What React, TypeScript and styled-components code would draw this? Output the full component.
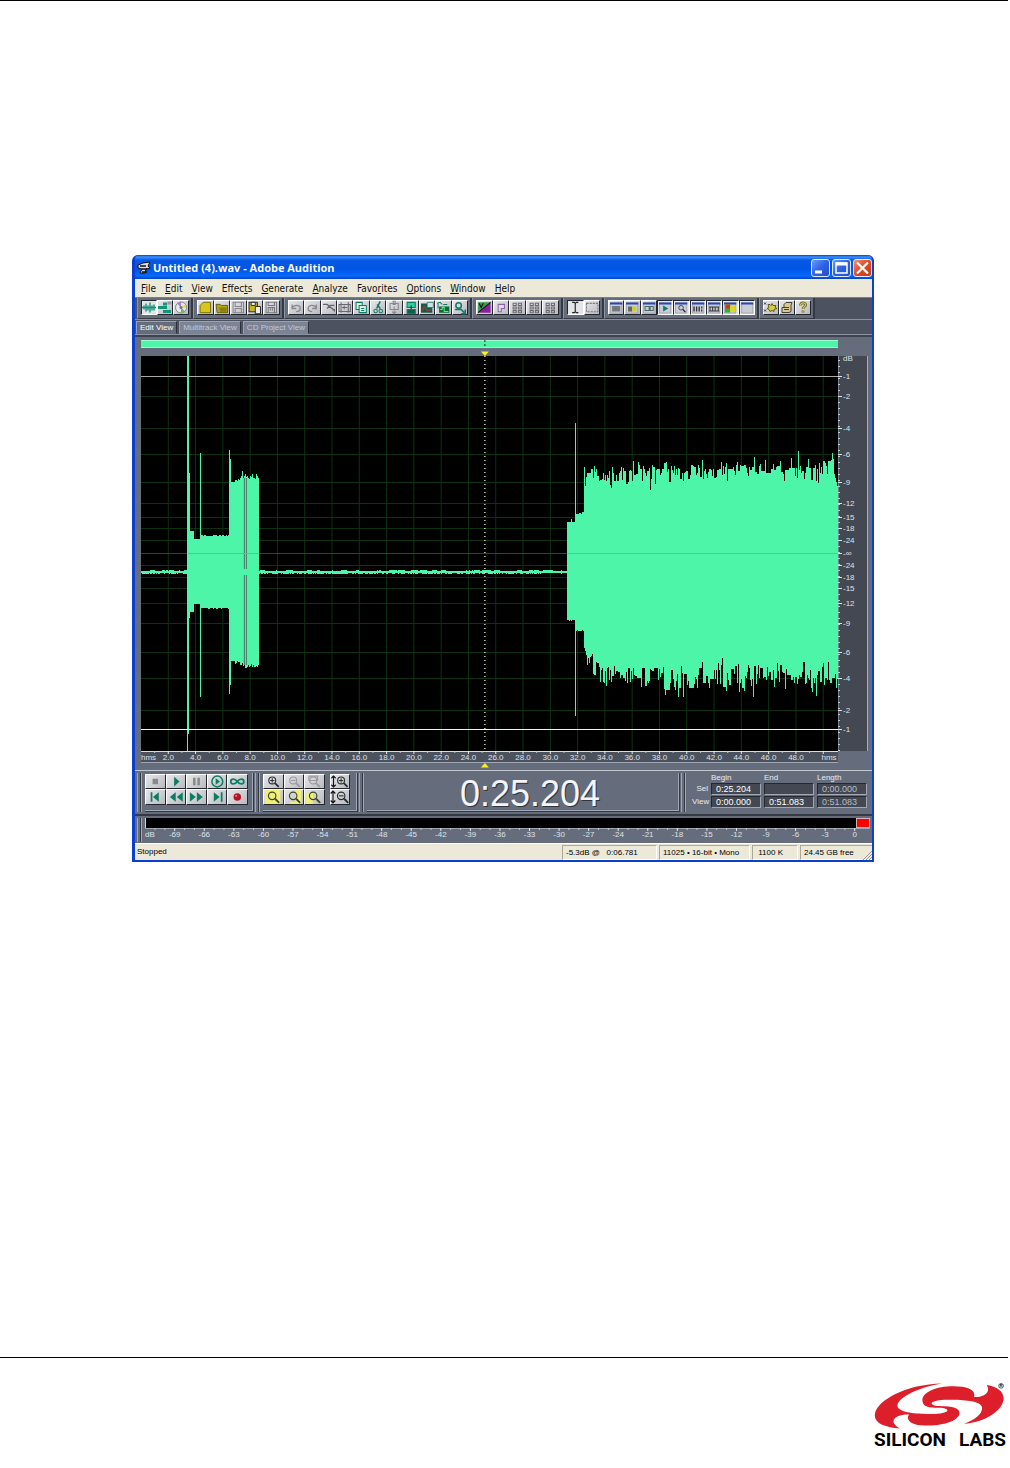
import React from "react";
import styled, { createGlobalStyle, css } from "styled-components";

const GlobalStyle = createGlobalStyle`
  *, *::before, *::after { box-sizing: border-box; }
  body { margin: 0; background: #fff; }
  button, input { font: inherit; margin: 0; padding: 0; }
`;

const sans = `"Liberation Sans", Arial, sans-serif`;
const uiSans = `"DejaVu Sans Condensed", "DejaVu Sans", Tahoma, sans-serif`;
const mint = "#4df5a9";
const steel = "#656d7c";

/* ---------- page ---------- */

const Page = styled.div`
  display: flex;
  flex-direction: column;
  min-height: 100vh;
  padding-right: 2px;
  font-family: ${sans};
`;
const Rule = styled.hr`
  width: 100%;
  height: 1px;
  margin: 0;
  border: 0;
  background: #000;
`;
const Figure = styled.main`
  flex: 1;
  padding: 254px 134px 0 132px;
`;
const Footer = styled.footer`
  display: flex;
  justify-content: flex-end;
  height: 110px;
  padding: 24px 2px 0 0;
`;
const Brand = styled.div`
  width: 132px;
`;
const Wordmark = styled.div`
  display: flex;
  justify-content: space-between;
  font: bold 19px/20px Roboto, sans-serif;
  color: #000;
`;

/* ---------- window frame ---------- */

const Window = styled.section`
  overflow: hidden;
  border: solid #0a3fd0;
  border-width: 0 2px 2px 3px;
  border-radius: 6px 6px 0 0;
  background: ${steel};
`;
const TitleBar = styled.header`
  display: flex;
  align-items: center;
  gap: 2px;
  height: 24px;
  padding: 2px 0 0 2px;
  background: linear-gradient(#0a3fc8 0, #3b93ff 2px, #0859e6 5px, #0054e3 14px, #0569fd 21px, #0342c0 24px);
`;
const Title = styled.h1`
  flex: 1;
  margin: 0;
  font: bold 11px/16px "Open Sans", "Trebuchet MS", sans-serif;
  color: #fff;
`;
const CaptionButton = styled.button<{ $close?: boolean }>`
  width: 19px;
  height: 18px;
  border: 1px solid #dfe8ff;
  border-radius: 3px;
  background: ${(p) => (p.$close ? "linear-gradient(135deg,#f09070,#dc4a24 50%,#c43a18)" : "linear-gradient(135deg,#6c9cf8,#2d62e2 50%,#1f50d0)")};
  svg { display: block; width: 17px; height: 16px; }
`;
const MenuBar = styled.nav`
  display: flex;
  gap: 9px;
  height: 18px;
  padding-left: 6px;
  background: #ece9d8;
`;
const MenuItem = styled.button`
  border: 0;
  background: none;
  font: 10px/17px ${uiSans};
  color: #111;
  u { text-underline-offset: 1px; }
`;

/* ---------- toolbar ---------- */

const ToolBar = styled.div`
  display: flex;
  height: 22px;
  padding-left: 2px;
  background: #4c525f;
  border-top: 1px solid #777f8c;
`;
const ToolGroup = styled.div<{ $w: number }>`
  display: flex;
  width: ${(p) => p.$w}px;
  padding: 2px 2px 3px 3px;
  border: solid;
  border-width: 0 2px 1px 1px;
  border-color: #343944 #343944 #343944 #8b93a1;
  background: ${steel};
`;
const raised = css`
  border: 1px solid;
  border-color: #fff #24272d #24272d #fff;
  background: linear-gradient(135deg, #e6e6ea, #b9bac0);
`;
const ToolButton = styled.button<{ $down?: boolean }>`
  ${raised}
  flex: 1;
  min-width: 0;
  ${(p) => p.$down && "border-color:#24272d #fff #fff #24272d; background:#e4e5e8;"}
  svg { display: block; width: 100%; height: 100%; }
`;

/* ---------- view tabs ---------- */

const Tabs = styled.div`
  display: flex;
  align-items: flex-end;
  gap: 2px;
  height: 15px;
  padding-left: 1px;
  border-top: 1px solid #8b93a1;
  background: #4c525f;
`;
const Tab = styled.button<{ $active?: boolean }>`
  height: 13px;
  padding: 0 3px;
  border: 1px solid;
  border-color: #9aa2b0 #2c303a transparent #9aa2b0;
  background: ${(p) => (p.$active ? steel : "#7b8394")};
  font: 8px/11px ${sans};
  color: ${(p) => (p.$active ? "#fff" : "#c3c9d4")};
`;

/* ---------- wave display ---------- */

const WavePanel = styled.div`
  display: grid;
  grid-template-columns: 1fr 30px;
  grid-template-rows: 8px 8px 395px 12px 6px;
  padding: 5px 4px 1px 6px;
  border-top: 1px solid #8b93a1;
  box-shadow: inset 0 2px 0 #3e434e;
  background: ${steel};
`;
const Overview = styled.div`
  background: ${mint};
  border: solid #9ff8d0;
  border-width: 1px 0;
`;
const Empty = styled.div``;
const Canvas = styled.svg<{ $bg?: string }>`
  display: block;
  width: 100%;
  height: 100%;
  overflow: visible;
  background: ${(p) => p.$bg || "none"};
  text { font: 8px ${sans}; fill: #dfe2e8; }
`;
const Axis = styled.div`
  border-right: 1px solid #a6adba;
  background: #434852;
`;

/* ---------- transport ---------- */

const Transport = styled.div`
  display: flex;
  height: 46px;
  padding: 2px 2px 2px 1px;
  border: solid;
  border-width: 1px 0 2px;
  border-color: #c0c5ce #0000 #343944;
  background: ${steel};
`;
const Grip = styled.span`
  width: 5px;
  margin: 0 3px 0 1px;
  border: solid #a0a7b4;
  border-width: 0 1px;
  box-shadow: inset -1px 0 0 #343944;
`;
const Section = styled.div<{ $w?: number }>`
  display: flex;
  flex: ${(p) => (p.$w ? `0 0 ${p.$w}px` : "1 1 0")};
  padding: 1px 0 0;
  border: solid;
  border-width: 0 1px 1px 0;
  border-color: #343944;
  box-shadow: inset -1px -1px 0 #a0a7b4;
`;
const ButtonGrid = styled.div<{ $cols: number; $w: number }>`
  display: grid;
  grid-template-columns: repeat(${(p) => p.$cols}, 1fr);
  grid-template-rows: 15px 16px;
  width: ${(p) => p.$w}px;
  margin-right: 5px;
`;
const PadButton = styled.button`
  ${raised}
  min-width: 0;
  svg { display: block; width: 100%; height: 100%; }
`;
const Clock = styled.output`
  flex: 1;
  padding-left: 14px;
  text-align: center;
  font: 36px/40px ${sans};
  color: #f4f5f7;
  text-shadow: 1px 1px 0 #30343d;
`;
const Times = styled.table`
  flex: 0 0 181px;
  width: 181px;
  border-spacing: 3px 1px;
  table-layout: fixed;
  height: 34px;
  font: 8px/10px ${sans};
  color: #e8eaee;
  th { padding: 0; font-weight: normal; text-align: left; height: 8px; line-height: 8px; }
  tbody th { text-align: right; }
  th[scope="col"] { width: 50px; }
  td { padding: 0; }
`;
const TimeField = styled.input<{ $dim?: boolean }>`
  display: block;
  width: 100%;
  height: 12px;
  padding-left: 4px;
  border: 1px solid;
  border-color: #24272d #a0a7b4 #a0a7b4 #24272d;
  background: #434852;
  font-size: 9px;
  color: ${(p) => (p.$dim ? "#b9bec8" : "#fff")};
`;

/* ---------- level meter and status ---------- */

const Meter = styled.div`
  display: flex;
  height: 27px;
  padding: 2px 2px 1px 1px;
  background: ${steel};
`;
const MeterBody = styled.div`
  flex: 1;
`;
const MeterBar = styled.div`
  display: flex;
  justify-content: flex-end;
  height: 10px;
  border-left: 1px solid #e8e060;
  background: #000;
`;
const Clip = styled.span`
  width: 14px;
  border: 1px solid #d8b0b0;
  background: #f00;
`;
const MeterScale = styled.div`
  height: 14px;
`;
const StatusBar = styled.footer`
  display: flex;
  gap: 2px;
  height: 17px;
  padding-top: 1px;
  border-top: 1px solid #fff;
  background: #ece9d8;
  font: 8px/14px ${sans};
  color: #000;
`;
const Status = styled.span<{ $w?: number }>`
  flex: ${(p) => (p.$w ? `0 0 ${p.$w}px` : "1")};
  padding-left: ${(p) => (p.$w ? 3 : 2)}px;
  white-space: pre;
  ${(p) => p.$w && "border: 1px solid; border-color: #aca899 #fff #fff #aca899; line-height: 13px;"}
`;
const Resize = styled.svg`
  width: 9px;
  height: 9px;
  margin: 6px 0 0 -12px;
`;

/* ---------- wave data ---------- */

const COLS = 698;
const DURATION = 51.083;
const CURSOR = 25.204;
const pct = (t: number) => `${(t / DURATION) * 100}%`;

function noise(seed: number) {
  let s = seed;
  return () => {
    s = (s * 1664525 + 1013904223) % 4294967296;
    return s / 4294967296;
  };
}

function wavePath() {
  const r = noise(77);
  let d = "";
  let up = 0;
  let down = 0;
  let hum = 0;
  for (let x = 0; x < COLS; x++) {
    if (r() > 0.6) hum = r();
    let top = 215 - Math.round(hum * 0.8);
    let bot = 217 + Math.round(r() * (x < 400 ? 1 : 0.6));
    if (x >= 46 && x < 48) [top, bot] = [0, x === 46 ? 395 : 378];
    else if (x === 48) [top, bot] = [117, 262];
    else if (x > 48 && x < 53) [top, bot] = [175, 256];
    else if (x >= 53 && x < 59) [top, bot] = [183, 248];
    else if (x === 59) [top, bot] = [97, 341];
    else if (x > 59 && x < 88) [top, bot] = [180 - Math.round(r()), 252 + Math.round(r() * 0.7)];
    else if (x === 88) [top, bot] = [94, 338];
    else if (x === 89) [top, bot] = [103, 329];
    else if (x > 89 && x < 94) [top, bot] = [126, 305];
    else if (x >= 94 && x < 118) {
      const k = r() * 5;
      [top, bot] = [(x < 102 ? 125 : 123) - k, (x < 102 ? 305 : 308) + r() * 4];
      if (x === 101) top = 115;
    } else if (x >= 427 && x < 435) [top, bot] = [167 - Math.round(r()) - (x === 431 ? 4 : 0), 264 + Math.round(r() * 0.7)];
    else if (x === 435) [top, bot] = [67, 360];
    else if (x > 435 && x < 444) [top, bot] = [158 - Math.round(r() * 2), 274 + Math.round(r())];
    else if (x >= 444) {
      const p = Math.min(1, (x - 444) / 90);
      const edge = Math.min(1, (x - 444) / 24);
      if (r() > 0.3) up = r() + r() - 1;
      if (r() > 0.3) down = r() + r() - 1;
      top = 122 - p * 9 + up * 14;
      bot = 304 + edge * 15 + p * 3 + down * 17;
      const spike = r();
      if (spike > 0.95) top -= 6;
      else if (spike < 0.05) top += 8;
      const dip = r();
      if (dip > 0.93) bot += 9;
      else if (dip < 0.05) bot -= 7;
      if (x > 680 && x < 694) top -= 6;
      if (x >= 694) top = 118 + (x - 694) * 4;
      bot = Math.min(bot, 341);
    }
    d += `M${x} ${Math.round(top)}h1V${Math.round(bot)}h-1z`;
  }
  return d;
}
const WAVE = wavePath();

const DB: [number, string][] = [
  [2, "dB"], [20, "-1"], [40, "-2"], [72, "-4"], [98, "-6"], [126, "-9"], [147, "-12"], [161, "-15"], [172, "-18"],
  [184, "-24"], [197, "-∞"], [209, "-24"], [221, "-18"], [232, "-15"], [247, "-12"], [267, "-9"], [296, "-6"],
  [322, "-4"], [354, "-2"], [373, "-1"],
];
const SECONDS = Array.from({ length: 25 }, (_, i) => (i + 1) * 2);

function WaveChart() {
  return (
    <Canvas $bg="#000" role="img" aria-label="Waveform">
      {SECONDS.map((t) => <line key={t} x1={pct(t)} x2={pct(t)} y1="0" y2="100%" stroke="#0d3212" />)}
      {DB.slice(2, 19).filter(([y]) => y !== 197).map(([y]) => <line key={y} x1="0" x2="100%" y1={y + 0.5} y2={y + 0.5} stroke="#0d3212" />)}
      <rect x="0" y="197" width="100%" height="1" fill="#9c1218" />
      <svg width="100%" height="395" viewBox={`0 0 ${COLS} 395`} preserveAspectRatio="none">
        <path d={WAVE} fill={mint} shapeRendering="crispEdges" />
        <path d="M103.5 122V213M105.5 122V213M103.5 219V309M105.5 219V309" stroke="#4c7464" fill="none" />
        <path d="M47 197.5H118M427 197.5H698" stroke="#50c896" fill="none" />
      </svg>
      <line x1="0" x2="100%" y1="20.5" y2="20.5" stroke="#a9aca4" />
      <line x1="0" x2="100%" y1="373.5" y2="373.5" stroke="#e8fbe8" />
      <line x1={pct(CURSOR)} x2={pct(CURSOR)} y1="0" y2="100%" stroke="#f0f0c8" strokeWidth="1.300" strokeDasharray="1 3" />
    </Canvas>
  );
}

function Marker({ down }: { down?: boolean }) {
  return (
    <Canvas aria-hidden="true">
      <svg x={pct(CURSOR)} width="1" height="8" overflow="visible">
        {down && <path d="M0-8V0" stroke="#222" strokeDasharray="2 2" />}
        <path d={down ? "M-4 3.500H4L0 8z" : "M-4 4.500H4L0 0z"} fill="#f8f220" />
      </svg>
    </Canvas>
  );
}

function TimeRuler() {
  return (
    <Canvas $bg="#4b515d" aria-hidden="true">
      <line x2="100%" y1=".5" y2=".5" stroke="#d8dce2" />
      <line x2="100%" y1="11.500" y2="11.500" stroke="#a0a7b4" />
      {SECONDS.map((t) => <line key={t} x1={pct(t)} x2={pct(t)} y1="0" y2="3" stroke="#e8eaee" />)}
      {SECONDS.map((t) => <line key={t} x1={pct(t - 1)} x2={pct(t - 1)} y1="0" y2="2" stroke="#c0c4cc" />)}
      <text x="0" y="9">hms</text>
      {SECONDS.slice(0, 24).map((t) => <text key={t} x={pct(t)} y="9" textAnchor="middle">{t.toFixed(1)}</text>)}
      <text x="99.800%" y="9" textAnchor="end">hms</text>
    </Canvas>
  );
}

function DbAxis() {
  return (
    <Canvas aria-hidden="true">
      <path d="M.5 0V395" stroke="#777f8c" />
      <path d="M1 4V395" stroke="#c9ced6" strokeWidth="2" strokeDasharray="1 5" />
      {DB.map(([y, label], i) => (
        <g key={i}>
          {i > 0 && <path d={`M0 ${y + 0.5}H4`} stroke="#e0e3e8" />}
          <text x="5" y={y + 3}>{label}</text>
        </g>
      ))}
    </Canvas>
  );
}

function MeterTicks() {
  const marks = Array.from({ length: 24 }, (_, i) => ({ x: 4.1 + i * 4.078, v: -69 + i * 3 }));
  return (
    <Canvas aria-hidden="true">
      <line x2="100%" y1=".5" y2=".5" stroke="#a0a7b4" />
      <text x="0" y="9">dB</text>
      {marks.map((m) => (
        <g key={m.v}>
          <line x1={`${m.x}%`} x2={`${m.x}%`} y1="0" y2="3" stroke="#e8eaee" />
          <line x1={`${m.x - 1.36}%`} x2={`${m.x - 1.36}%`} y1="0" y2="2" stroke="#c0c4cc" />
          <line x1={`${m.x - 2.72}%`} x2={`${m.x - 2.72}%`} y1="0" y2="2" stroke="#c0c4cc" />
          <text x={`${m.x}%`} y="9" textAnchor="middle">{m.v}</text>
        </g>
      ))}
    </Canvas>
  );
}

/* ---------- icons, drawn on a 16 x 14 grid ---------- */

const G = "#0b7d62";
const win = (inner: React.ReactNode) => (
  <>
    <path d="M2.500 2.500h11v10h-11z" fill="#c9ccd2" stroke="#8a8f99" strokeWidth=".6" />
    <path d="M2 2h12v2H2z" fill="#2448b8" />
    {inner}
  </>
);
const grid9 = <path d="M4 3h3v2H4zM9 3h3v2H9zM4 6.500h3v2H4zM9 6.500h3v2H9zM4 10h3v2H4zM9 10h3v2H9z" fill="none" stroke="#6a6a6e" strokeWidth="1" />;
const lens = (c: string) => <g fill="none" stroke={c}><circle cx="7" cy="6" r="3.200" /><path d="M9.500 8.500L13 12" strokeWidth="1.600" /></g>;

const ICONS: Record<string, React.ReactNode> = {
  "Edit waveform": <path d="M1 7h14M3 5v4M5 3v8M7 5v5M9 2v10M11 5v5M13 4v6" fill="none" stroke="#12937a" strokeWidth="1.400" />,
  "Multitrack": <g fill="#12937a"><path d="M6 2h4v3H6zM1 5.500h9v3H1zM6 9.500h8v3H6z" /><path d="M10.500 1h4v3h-4z" fill="#999" /></g>,
  "CD project": <g><circle cx="8" cy="7" r="5.500" fill="#e8e8ee" stroke="#888" /><path d="M8 7L4 3a6 6 0 014-1.500z" fill="#b07ad0" /><path d="M8 7l4 4a6 6 0 01-4 1.500z" fill="#68b860" /><path d="M8 7l5-3v3z" fill="#e0d040" /><circle cx="8" cy="7" r="1.500" fill="#777" /></g>,
  "New": <path d="M3 5l3-3h7v10H3z" fill="#d9c51c" stroke="#6a5d08" strokeWidth=".8" />,
  "Open": <g><path d="M2 4h4l1 1h6v7H3z" fill="#b3a414" stroke="#5a5008" strokeWidth=".8" /><path d="M5 7h7v4H6z" fill="#8c7e0c" /></g>,
  "Save": <path d="M3 2h10v10H3zM5 2v4h6V2M5 12V8h6v4" fill="none" stroke="#85858a" />,
  "Save as": <g><path d="M2 2h8v9H2z" fill="#c8b820" stroke="#333" /><path d="M4 2h4v3H4zM8 6h5v7H8z" fill="#eee" stroke="#222" strokeWidth=".9" /></g>,
  "Save all": <path d="M3 2h10v10H3zM5 2v3h6V2M5 12V7h6v5M7 7v3M9 7v3" fill="none" stroke="#77777c" />,
  "Undo": <path d="M4 8c1-4 8-4 8 0 0 2-2 3-4 3M4 4v4h4" fill="none" stroke="#88888e" strokeWidth="1.300" />,
  "Redo": <path d="M12 8c-1-4-8-4-8 0 0 2 2 3 4 3M12 4v4H8" fill="none" stroke="#88888e" strokeWidth="1.300" />,
  "Repeat": <path d="M2 4h4l6 5M6 8l3-3h4M11 9h2v2" fill="none" stroke="#66666c" strokeWidth="1.300" />,
  "Trim": <path d="M2 4h11v7H2zM4 2v10M11 2v10M5 7h5M7 5v4" fill="none" stroke="#66666c" />,
  "Copy": <g fill="#d8efe6" stroke={G}><path d="M3 2h6v7H3z" /><path d="M6 5h7v7H6zM8 8h3M8 10h3" /></g>,
  "Cut": <g stroke={G} fill="none"><path d="M10 1L6.500 8M7 4l3 4" strokeWidth="1.500" /><circle cx="5.500" cy="10.500" r="1.700" /><circle cx="10.500" cy="10.500" r="1.700" /></g>,
  "Paste": <path d="M4 3h8v6H4zM7 1h2v3H7zM8 6v7M6 11l2 2 2-2" fill="none" stroke="#88888e" />,
  "Paste new": <g stroke={G}><path d="M4 2h8v5H4z" fill="#2fd0a4" /><path d="M8 5v5" stroke="#111" /><path d="M4 9h8v4H4z" fill="#0c6048" /></g>,
  "Mix paste": <g><path d="M2 3h11v9H2z" fill="#0c6048" /><path d="M8 2h6v5H8z" fill="#cde" stroke={G} strokeWidth=".7" /><path d="M3 10l2-4 3 4 4-1" stroke="#c83030" fill="none" /></g>,
  "Insert": <g><path d="M4 6h10v6H4z" fill="#0a6b3a" /><path d="M2 3l3-1 2 2M3 2v6M8 4h4" stroke={G} fill="none" /><path d="M5 9h2V7h2v4h4" stroke="#60f060" fill="none" /></g>,
  "Convert": <g fill="none" stroke={G} strokeWidth="1.500"><circle cx="6.500" cy="5" r="2.700" /><path d="M3 9h6l3 3M13 9v4H9" /></g>,
  "Spectral": <g><path d="M2 2h12L2 12z" fill="#3c9c54" /><path d="M14 2v10H2z" fill="#8a20a0" /><path d="M2 12L14 2M3 3l2 4 2-4" stroke="#111" fill="none" /></g>,
  "Snap": <path d="M5 11V4h6v4H8v3z" fill="#ddd" stroke="#8a62a8" />,
  "Cue list": grid9, "Play list": grid9, "Group waves": grid9,
  "Time selection": <path d="M5 2h2l1 1 1-1h2M8 3v8M5 12h2l1-1 1 1h2" fill="none" stroke="#222" strokeWidth="1.100" />,
  "Marquee": <path d="M2.500 3h11v8h-11z" fill="none" stroke="#777" strokeDasharray="2 1" />,
  "Files window": win(<path d="M4 5.500h8v5.500H4z" fill="#75777c" />),
  "Effects window": win(<><path d="M4 6h4v5H4z" fill="#666" /><path d="M8 6h4v5H8z" fill="#cfcf30" /></>),
  "Favorites window": win(<path d="M4 6h4v4H4zM9 6h3v4H9z" fill="none" stroke="#4a6c66" />),
  "Transport window": win(<path d="M6 5l5 3-5 3z" fill={G} />),
  "Zoom window": win(<g transform="translate(3 3) scale(.7)">{lens("#222")}</g>),
  "Time window": win(<path d="M4 6v5M6.500 6v5M9 6v5M11.500 6v2M11.500 9v2" fill="none" stroke="#333" strokeWidth="1.300" />),
  "Level window": win(<path d="M3 6.500h10M3 10.500h10M4 6v5M6.500 6v5M9 6v5M12 6v5" stroke="#333" />),
  "Placekeeper": win(<><path d="M3 4h5v8H3z" fill="#26b432" /><path d="M4 4h4v4H4z" fill="#e03020" /><path d="M8 5h5v6H8z" fill="#e0d820" /></>),
  "Session window": win(null),
  "Options": <g><path d="M1 2l2 2M3 2L1 4M1 9l2 2M3 9l-2 2" stroke="#333" /><path d="M5 4h2l1 1 1-2 1 2h3l-1 2 2 1-3 1v2l-2-1-2 1-1-2-2-1 2-1z" fill="#d8cc40" stroke="#55500c" strokeWidth=".9" /></g>,
  "Scripts": <path d="M5 4l2-2h6l-1 3v6l-2 1H3V7h2zM5 7h5M5 9h5" fill="#d8c890" stroke="#333" strokeWidth=".9" />,
  "Help": <g fill="none"><path d="M5.500 5c0-4 6-3 5 0-.5 1-2.500 1.500-2.500 3.500M8 10v2" stroke="#55501c" strokeWidth="2.600" /><path d="M5.500 5c0-4 6-3 5 0-.5 1-2.500 1.500-2.500 3.500M8 10v2" stroke="#d8cc50" strokeWidth="1.300" /></g>,
  "Stop": <path d="M5.500 4.500h5v5h-5z" fill="#888" />,
  "Play": <path d="M6 2.500l5 4.500-5 4.500z" fill={G} />,
  "Pause": <path d="M5 3.500h2.300v7H5zM9 3.500h2.300v7H9z" fill="#888" />,
  "Play to end": <g><circle cx="8" cy="7" r="5" fill="none" stroke={G} strokeWidth="1.400" /><path d="M6.500 4l4 3-4 3z" fill={G} /></g>,
  "Loop": <path d="M8 7c-2-3-6-3-6 0s4 3 6 0 6-3 6 0-4 3-6 0" fill="none" stroke={G} strokeWidth="1.600" />,
  "Go to start": <path d="M4 3h1.500v8H4zM11 3L6 7l5 4z" fill={G} />,
  "Rewind": <path d="M7.500 3v8L2.500 7zM13.500 3v8L8.500 7z" fill={G} />,
  "Fast forward": <path d="M2.500 3l5 4-5 4zM8.500 3l5 4-5 4z" fill={G} />,
  "Go to end": <path d="M5 3l5 4-5 4zM11 3h1.500v8H11z" fill={G} />,
  "Record": <g><circle cx="8" cy="7" r="3.200" fill="#b41420" /><circle cx="7" cy="6" r="1" fill="#f07070" /></g>,
  "Zoom in": <>{lens("#23302c")}<path d="M5 6h4M7 4v4" stroke="#333" /></>,
  "Zoom out": <>{lens("#9a9aa0")}<path d="M5 6h4" stroke="#999" /></>,
  "Zoom full": <>{lens("#9a9aa0")}<path d="M3 2h8v4H3z" stroke="#999" fill="none" /></>,
  "Zoom to selection": <><path d="M1 1h13v12H1z" fill="#f2ee7a" />{lens("#3b4a20")}</>,
  "Zoom to left edge": <><path d="M9 1h5v12H4v-2h5z" fill="#f2ee7a" />{lens("#3b4a20")}</>,
  "Zoom to right edge": <><path d="M1 13V4h6v9z" fill="#f2ee7a" />{lens("#3b4a20")}</>,
  "Zoom in vertically": <><g transform="translate(2 0)">{lens("#23302c")}<path d="M5 6h4M7 4v4" stroke="#333" /></g><path d="M2 2v10M0 4l2-2 2 2M0 10l2 2 2-2" stroke="#111" fill="none" /></>,
  "Zoom out vertically": <><g transform="translate(2 0)">{lens("#23302c")}<path d="M5 6h4" stroke="#333" /></g><path d="M2 2v10M0 4l2-2 2 2M0 10l2 2 2-2" stroke="#111" fill="none" /></>,
};
const Icon = ({ name }: { name: string }) => <svg viewBox="1 1 14 12" overflow="visible" aria-hidden="true">{ICONS[name]}</svg>;

const TOOLS: { w: number; items: string[]; down?: string[] }[] = [
  { w: 56, items: ["Edit waveform", "Multitrack", "CD project"], down: ["Edit waveform"] },
  { w: 91, items: ["New", "Open", "Save", "Save as", "Save all"] },
  { w: 188, items: ["Undo", "Redo", "Repeat", "Trim", "Copy", "Cut", "Paste", "Paste new", "Mix paste", "Insert", "Convert"] },
  { w: 91, items: ["Spectral", "Snap", "Cue list", "Play list", "Group waves"] },
  { w: 41, items: ["Time selection", "Marquee"], down: ["Time selection"] },
  { w: 155, items: ["Files window", "Effects window", "Favorites window", "Transport window", "Zoom window", "Time window", "Level window", "Placekeeper", "Session window"],
    down: ["Transport window", "Zoom window", "Time window", "Level window", "Placekeeper", "Session window"] },
  { w: 56, items: ["Options", "Scripts", "Help"] },
];
const MENUS: [string, string, string][] = [
  ["", "F", "ile"], ["", "E", "dit"], ["", "V", "iew"], ["Effec", "t", "s"], ["", "G", "enerate"],
  ["", "A", "nalyze"], ["Favo", "r", "ites"], ["", "O", "ptions"], ["", "W", "indow"], ["", "H", "elp"],
];
const PLAYBACK = ["Stop", "Play", "Pause", "Play to end", "Loop", "Go to start", "Rewind", "Fast forward", "Go to end", "Record"];
const ZOOM = ["Zoom in", "Zoom out", "Zoom full", "Zoom to selection", "Zoom to left edge", "Zoom to right edge"];
const VZOOM = ["Zoom in vertically", "Zoom out vertically"];

function Pad({ items, cols, w }: { items: string[]; cols: number; w: number }) {
  return (
    <ButtonGrid $cols={cols} $w={w}>
      {items.map((n) => <PadButton key={n} aria-label={n}><Icon name={n} /></PadButton>)}
    </ButtonGrid>
  );
}

function SelectionTimes() {
  const rows: [string, string[]][] = [
    ["Sel", ["0:25.204", "", "0:00.000"]],
    ["View", ["0:00.000", "0:51.083", "0:51.083"]],
  ];
  const cols = ["Begin", "End", "Length"];
  return (
    <Times>
      <thead><tr><td />{cols.map((c) => <th key={c} scope="col">{c}</th>)}</tr></thead>
      <tbody>
        {rows.map(([name, values]) => (
          <tr key={name}>
            <th scope="row">{name}</th>
            {values.map((v, i) => <td key={i}><TimeField aria-label={`${name} ${cols[i]}`} defaultValue={v} $dim={i === 2} /></td>)}
          </tr>
        ))}
      </tbody>
    </Times>
  );
}

function Logo() {
  return (
    <Brand>
      <svg viewBox="42 110 400 144" width="132" height="48" display="block" role="img" aria-label="Silicon Labs">
        <path
          fill="#dc1f2b"
          d="M189 168C184 142 228 122 282 122C328 122 352 134 345 155C370 156 398 144 384 118C425 124 442 148 432 172C420 204 370 232 315 236C352 222 376 200 368 182C358 164 300 162 255 163C210 165 204 180 240 182C285 183 304 190 301 206C294 232 240 242 196 241C158 241 136 226 148 208C118 206 76 224 120 250C70 246 40 232 45 205C52 165 140 116 248 114C180 124 104 160 114 186C124 204 180 207 225 206C275 204 275 188 240 187C205 187 192 184 189 168Z"
        />
        <circle cx="427" cy="121" r="7" fill="none" stroke="#000" strokeWidth="2" />
        <text x="427" y="125" textAnchor="middle" fontSize="11" fontWeight="bold">R</text>
      </svg>
      <Wordmark><span>SILICON</span><span>LABS</span></Wordmark>
    </Brand>
  );
}

export default function App() {
  return (
    <Page>
      <GlobalStyle />
      <Rule />
      <Figure>
        <Window>
          <TitleBar>
            <svg width="14" height="14" viewBox="0 0 14 14" aria-hidden="true">
              <path d="M1 4l5-2 7-1-2 4 2 2-4 1-1 4H3l2-4-4-1z" fill="#d8dde6" stroke="#111" />
              <path d="M3 5h6M5 8h5M5 11h5" stroke="#111" strokeWidth="1.500" />
            </svg>
            <Title>Untitled (4).wav - Adobe Audition</Title>
            <CaptionButton aria-label="Minimize"><svg viewBox="0 0 17 16"><path d="M3 12h7" stroke="#fff" strokeWidth="3" /></svg></CaptionButton>
            <CaptionButton aria-label="Maximize"><svg viewBox="0 0 17 16"><path d="M3 3v10h11V3z" fill="none" stroke="#fff" strokeWidth="1.500" /><path d="M3 4h11" stroke="#fff" strokeWidth="3" /></svg></CaptionButton>
            <CaptionButton aria-label="Close" $close><svg viewBox="0 0 17 16"><path d="M3 2.500l11 11M14 2.500l-11 11" stroke="#fff" strokeWidth="2.200" /></svg></CaptionButton>
          </TitleBar>
          <MenuBar>
            {MENUS.map(([a, k, b]) => <MenuItem key={a + k + b}>{a}<u>{k}</u>{b}</MenuItem>)}
          </MenuBar>
          <ToolBar>
            {TOOLS.map((g) => (
              <ToolGroup key={g.items[0]} $w={g.w}>
                {g.items.map((n) => <ToolButton key={n} aria-label={n} $down={g.down?.includes(n)}><Icon name={n} /></ToolButton>)}
              </ToolGroup>
            ))}
          </ToolBar>
          <Tabs>
            <Tab $active>Edit View</Tab>
            <Tab>Multitrack View</Tab>
            <Tab>CD Project View</Tab>
          </Tabs>
          <WavePanel>
            <Overview /><Empty />
            <Marker down /><Empty />
            <WaveChart /><Axis><DbAxis /></Axis>
            <TimeRuler /><Empty />
            <Marker /><Empty />
          </WavePanel>
          <Transport>
            <Grip />
            <Section $w={109}><Pad items={PLAYBACK} cols={5} w={103} /></Section>
            <Grip />
            <Section $w={95}>
              <Pad items={ZOOM} cols={3} w={62} />
              <Pad items={VZOOM} cols={1} w={20} />
            </Section>
            <Grip />
            <Section><Clock>0:25.204</Clock></Section>
            <Grip />
            <SelectionTimes />
          </Transport>
          <Meter>
            <Grip />
            <MeterBody>
              <MeterBar><Clip /></MeterBar>
              <MeterScale><MeterTicks /></MeterScale>
            </MeterBody>
          </Meter>
          <StatusBar>
            <Status>Stopped</Status>
            <Status $w={95}>{"-5.3dB @   0:06.781"}</Status>
            <Status $w={91}>11025 • 16-bit • Mono</Status>
            <Status $w={46}>{" 1100 K"}</Status>
            <Status $w={73}>24.45 GB free</Status>
            <Resize viewBox="0 0 9 9" aria-hidden="true"><path d="M0 9L9 0M3 9L9 3M6 9L9 6" stroke="#9a978a" /></Resize>
          </StatusBar>
        </Window>
      </Figure>
      <Rule />
      <Footer><Logo /></Footer>
    </Page>
  );
}
